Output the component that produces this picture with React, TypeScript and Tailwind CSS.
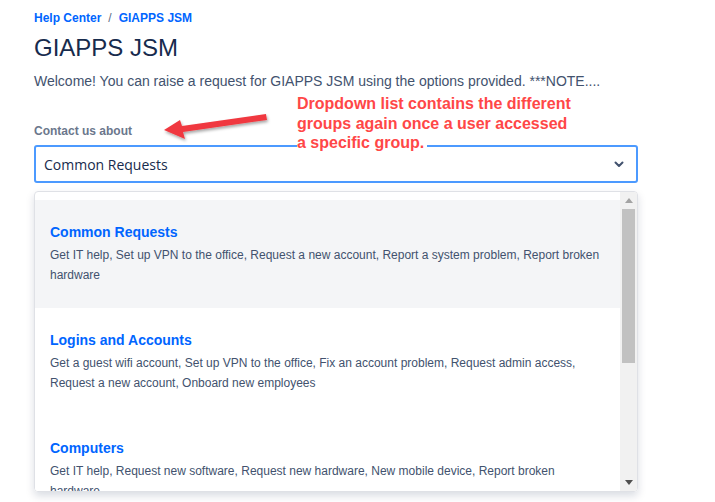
import React from 'react';

const groups = [
    {
        title: 'Common Requests',
        desc: 'Get IT help, Set up VPN to the office, Request a new account, Report a system problem, Report broken hardware',
        active: true,
    },
    {
        title: 'Logins and Accounts',
        desc: 'Get a guest wifi account, Set up VPN to the office, Fix an account problem, Request admin access, Request a new account, Onboard new employees',
        active: false,
    },
    {
        title: 'Computers',
        desc: 'Get IT help, Request new software, Request new hardware, New mobile device, Report broken hardware',
        active: false,
    },
];

const App: React.FC = () => {
    return (
        <div className="relative w-[715px] h-[502px] overflow-hidden bg-white font-['Liberation_Sans',Arial,sans-serif]">
            <div className="pt-[10px] px-[34px] w-[672px]">
                {/* Breadcrumb */}
                <div className="flex items-center gap-[7px] text-[12px] leading-[16px] font-bold text-[#0065ff]">
                    <span>Help Center</span>
                    <span className="font-normal text-[#5e6c84]">/</span>
                    <span>GIAPPS JSM</span>
                </div>

                <h1 className="mt-[8px] text-[24px] leading-[28px] text-[#172b4d]">GIAPPS JSM</h1>
                <p className="mt-[9px] text-[14px] leading-[20px] text-[#42526e]">
                    Welcome! You can raise a request for GIAPPS JSM using the options provided. ***NOTE....
                </p>

                <div className="mt-[32px] text-[12px] leading-[16px] font-bold text-[#6b778c]">Contact us about</div>

                {/* Select */}
                <div className="mt-[6px] h-[38px] border-2 border-[#4c9aff] rounded-[3px] flex items-center justify-between pl-[8px] pr-[12px]">
                    <span className="text-[14px] text-[#172b4d] font-['Open_Sans',sans-serif]">Common Requests</span>
                    <svg width="10" height="7" viewBox="0 0 10 7" className="mt-[1px]">
                        <path d="M1.5 1.5 L5 5 L8.5 1.5" fill="none" stroke="#42526e" strokeWidth="2" strokeLinecap="round" strokeLinejoin="round" />
                    </svg>
                </div>

                {/* Dropdown list */}
                <div className="mt-[8px] h-[301px] border border-[#dfe1e6] rounded-[4px] shadow-[0_4px_8px_rgba(9,30,66,0.15)] flex overflow-hidden">
                    <div className="flex-1 pt-[8px] overflow-hidden">
                        {groups.map((g) => (
                            <div
                                key={g.title}
                                className={`pl-[15px] pr-[16px] pt-[22px] pb-[23px] ${g.active ? 'bg-[#f4f5f7]' : 'bg-white'}`}
                            >
                                <div className="text-[14px] leading-[20px] font-bold text-[#0065ff]">{g.title}</div>
                                <div className="mt-[3px] text-[12px] leading-[20px] text-[#42526e]">{g.desc}</div>
                            </div>
                        ))}
                    </div>
                    {/* Scrollbar */}
                    <div className="w-[17px] bg-[#f1f1f1] flex flex-col items-center">
                        <div className="h-[17px] flex items-center justify-center">
                            <svg width="8" height="5" viewBox="0 0 8 5">
                                <path d="M0 5 L4 0 L8 5 Z" fill="#a3a3a3" />
                            </svg>
                        </div>
                        <div className="w-[13px] h-[154px] bg-[#c1c1c1]" />
                        <div className="flex-1" />
                        <div className="h-[17px] flex items-center justify-center">
                            <svg width="8" height="5" viewBox="0 0 8 5">
                                <path d="M0 0 L8 0 L4 5 Z" fill="#505050" />
                            </svg>
                        </div>
                    </div>
                </div>
            </div>

            {/* Annotation arrow */}
            <svg className="absolute left-[155px] top-[105px]" width="120" height="40" viewBox="0 0 120 40">
                <defs>
                    <filter id="sh" x="-20%" y="-50%" width="140%" height="200%">
                        <feDropShadow dx="1" dy="2" stdDeviation="1.5" floodColor="#000" floodOpacity="0.35" />
                    </filter>
                </defs>
                <g filter="url(#sh)">
                    <path d="M111 9 L112 15 L28 27 L30 34 L9 25 L25 15 L27 21 Z" fill="#f0393f" />
                </g>
            </svg>

            {/* Annotation text */}
            <div className="absolute left-[297px] top-[94px] text-[16px] leading-[19.5px] font-bold text-[#ff4747]">
                <div>Dropdown list contains the different</div>
                <div>groups again once a user accessed</div>
                <div><span className="bg-white pr-[3px]">a specific group.</span></div>
            </div>
        </div>
    );
};

export default App;
